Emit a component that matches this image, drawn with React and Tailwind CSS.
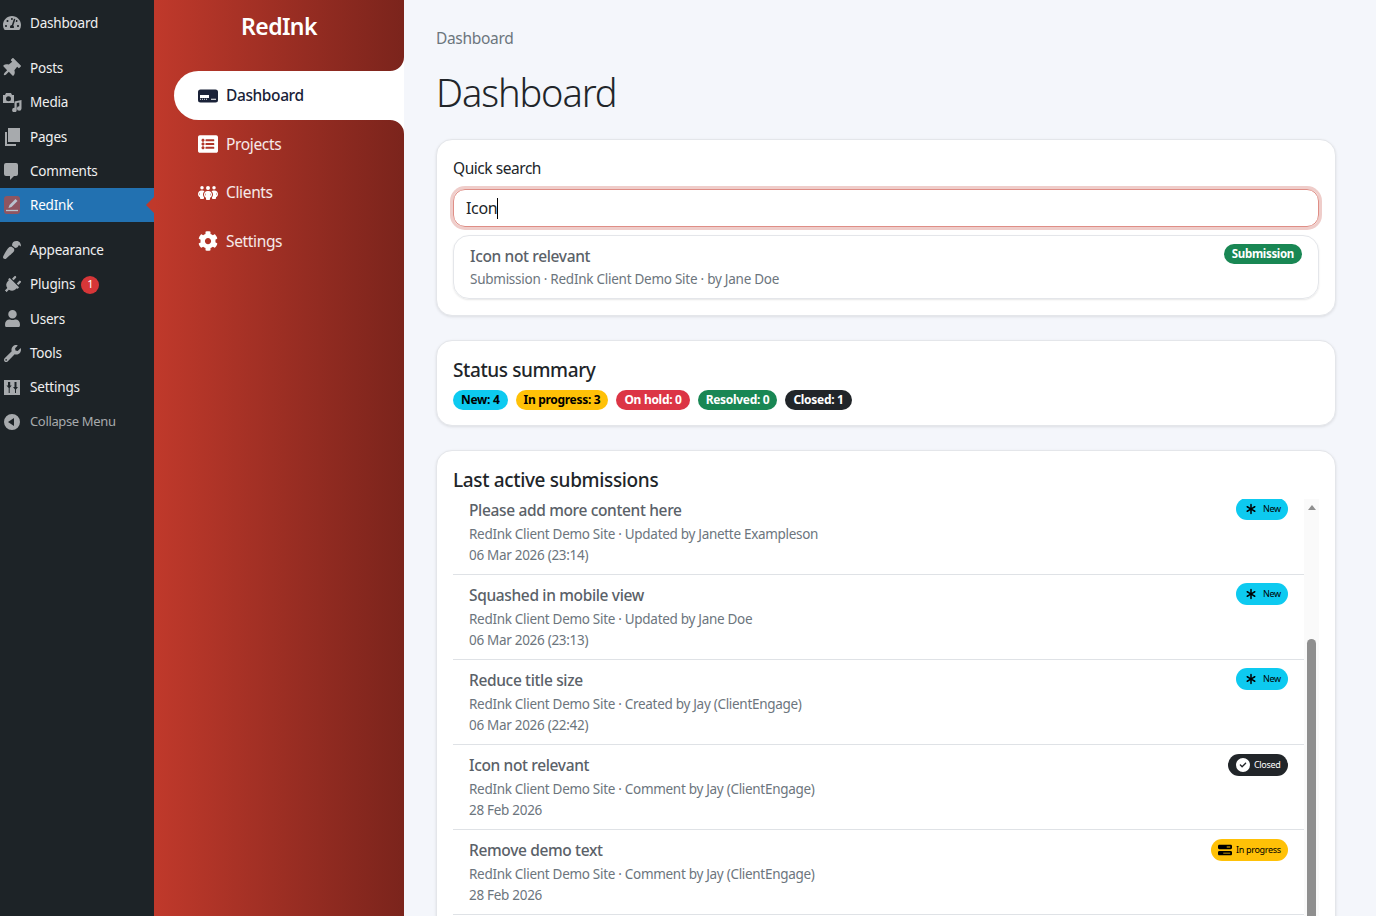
import {
  FaThumbtack, FaPaintBrush, FaPlug, FaUser, FaWrench, FaTachometerAlt, FaListAlt, FaCog,
} from "react-icons/fa";
import { FaAsterisk, FaBarsProgress, FaCircleCheck, FaPeopleGroup } from "react-icons/fa6";

function MediaIcon() {
  return (
    <svg viewBox="0 0 20 20" className="w-[20px] h-[20px]" fill="currentColor">
      <path d="M1 3h2l1-2h5l1 2h2v8H1zM6.500 4.200a2.500 2.500 0 1 0 0 5 2.500 2.500 0 0 0 0-5z" fillRule="evenodd" />
      <path d="M12.500 9.500l7-1.500V16.500a2.300 2.300 0 1 1-2.200-2.300V10.400l-2.600.6V18a2.300 2.300 0 1 1-2.200-2.300z" />
    </svg>
  );
}

function PagesIcon() {
  return (
    <svg viewBox="0 0 20 20" className="w-[20px] h-[20px]" fill="currentColor">
      <path d="M6 1h12v14H6z" />
      <path d="M3 5h2v12h9v2H3z" />
    </svg>
  );
}

function CommentIcon() {
  return (
    <svg viewBox="0 0 20 20" className="w-[20px] h-[20px]" fill="currentColor">
      <path d="M4 2h10a2 2 0 0 1 2 2v9a2 2 0 0 1-2 2h-2l-4 4v-4H4a2 2 0 0 1-2-2V4a2 2 0 0 1 2-2z" />
    </svg>
  );
}

function RedInkIcon() {
  return (
    <svg viewBox="0 0 20 20" className="w-[20px] h-[20px]">
      <rect x="2" y="1" width="16" height="18" rx="3" fill="#8f5561" />
      <path d="M13.500 4l2 2-6 6-3 1 1-3z" fill="#b9c4d0" />
      <path d="M4 15.500h12" stroke="#b9c4d0" strokeWidth="1.300" />
    </svg>
  );
}

function SettingsIcon() {
  return (
    <svg viewBox="0 0 20 20" className="w-[20px] h-[20px]" fill="currentColor">
      <path fillRule="evenodd" d="M2 3h16v15H2zM6 5v3.500H4.500L6.700 11V16h1V11l2-2.500H8.200V5zM12.500 5v5H11l2 2.500V16h1v-3.500l2-2.500h-1.500V5z" />
    </svg>
  );
}

function CollapseIcon() {
  return (
    <svg viewBox="0 0 20 20" className="w-[20px] h-[20px]" fill="currentColor">
      <path fillRule="evenodd" d="M10 2a8 8 0 1 1 0 16 8 8 0 0 1 0-16zM12 6l-6 4 6 4z" />
    </svg>
  );
}

function DriveIcon() {
  return (
    <svg viewBox="0 0 20 14" className="w-[20px] h-[14px]" fill="currentColor">
      <path fillRule="evenodd" d="M2.500 0.500h15a2.500 2.500 0 0 1 2.500 2.500v8a2.500 2.500 0 0 1-2.500 2.500h-15A2.500 2.500 0 0 1 0 11V3a2.500 2.500 0 0 1 2.500-2.500zM2 6v2.900h9V6zM13 9.800v1h5v-1zM2 9.800v1h.9v-1zM4 9.800v1h.9v-1zM6 9.800v1h.9v-1zM8 9.800v1h.9v-1z" />
    </svg>
  );
}

const wpMenu = [
  { label: "Dashboard", icon: <FaTachometerAlt size={18} />, gap: true },
  { label: "Posts", icon: <FaThumbtack size={19} className="-translate-x-[2px] rotate-45" /> },
  { label: "Media", icon: <MediaIcon /> },
  { label: "Pages", icon: <PagesIcon /> },
  { label: "Comments", icon: <CommentIcon /> },
  { label: "RedInk", icon: <RedInkIcon />, active: true, gap: true },
  { label: "Appearance", icon: <FaPaintBrush size={18} className="rotate-180" /> },
  { label: "Plugins", icon: <FaPlug size={18} className="rotate-45" />, count: 1 },
  { label: "Users", icon: <FaUser size={17} /> },
  { label: "Tools", icon: <FaWrench size={17} /> },
  { label: "Settings", icon: <SettingsIcon /> },
  { label: "Collapse Menu", icon: <CollapseIcon />, muted: true },
];

const submissions = [
  { title: "Please add more content here", sub: "RedInk Client Demo Site · Updated by Janette Exampleson", date: "06 Mar 2026 (23:14)", status: "new" },
  { title: "Squashed in mobile view", sub: "RedInk Client Demo Site · Updated by Jane Doe", date: "06 Mar 2026 (23:13)", status: "new" },
  { title: "Reduce title size", sub: "RedInk Client Demo Site · Created by Jay (ClientEngage)", date: "06 Mar 2026 (22:42)", status: "new" },
  { title: "Icon not relevant", sub: "RedInk Client Demo Site · Comment by Jay (ClientEngage)", date: "28 Feb 2026", status: "closed" },
  { title: "Remove demo text", sub: "RedInk Client Demo Site · Comment by Jay (ClientEngage)", date: "28 Feb 2026", status: "progress" },
];

function WpSidebar() {
  return (
    <div className="w-[154px] shrink-0 bg-[#1d2327] pt-[6px] text-[13.500px] tracking-[-0.2px]">
      {wpMenu.map((item) => (
        <div
          key={item.label}
          className={`relative flex h-[34.3px] items-center ${item.gap ? "mb-[10.7px]" : ""} ${item.active ? "bg-[#2271b1] text-white" : item.muted ? "text-[13px] tracking-[-0.35px] text-[#a7aaad]" : "text-[#f0f0f1]"}`}
        >
          <span className={`flex w-[30px] shrink-0 justify-center pr-[6px] ${item.active ? "" : "text-[#a7aaad]"}`}>{item.icon}</span>
          <span>{item.label}</span>
          {item.count && (
            <span className="ml-[6px] flex h-[18px] w-[18px] items-center justify-center rounded-full bg-[#d63638] text-[11px] text-white">{item.count}</span>
          )}
          {item.active && (
            <span className="absolute right-0 h-0 w-0 border-y-[8px] border-r-[8px] border-y-transparent border-r-[#c0392b]" />
          )}
        </div>
      ))}
    </div>
  );
}

function NavItem({ icon, label, active }) {
  if (active) {
    return (
      <div className="ml-[20px] flex h-[49px] items-center gap-[8px] rounded-l-[25px] bg-white pl-[24px] font-medium tracking-[-0.4px] text-[#1a2238]">
        <span className="flex w-[20px] justify-center">{icon}</span>
        {label}
      </div>
    );
  }
  return (
    <div className="ml-[20px] flex h-[48.500px] items-center gap-[8px] pl-[24px] text-white/90">
      <span className="flex w-[20px] justify-center text-white">{icon}</span>
      {label}
    </div>
  );
}

function RedSidebar() {
  return (
    <div className="relative w-[250px] shrink-0 bg-gradient-to-r from-[#c0392b] to-[#7b241c] text-[15.500px] tracking-[-0.35px]">
      <div className="h-[71px] pt-[9px] text-center text-[23px] font-semibold tracking-[-0.6px] text-white">RedInk</div>
      <NavItem active label="Dashboard" icon={<DriveIcon />} />
      <div className="pointer-events-none absolute right-0 top-[57px] h-[14px] w-[14px] bg-white [clip-path:path('M14_0V14H0A14_14_0_0_0_14_0Z')]" />
      <div className="pointer-events-none absolute right-0 top-[120px] h-[14px] w-[14px] bg-white [clip-path:path('M0_0H14V14A14_14_0_0_0_0_0Z')]" />
      <NavItem label="Projects" icon={<FaListAlt size={20} />} />
      <NavItem label="Clients" icon={<FaPeopleGroup size={20} />} />
      <NavItem label="Settings" icon={<FaCog size={20} />} />
    </div>
  );
}

function Card({ className, children }) {
  return (
    <div className={`rounded-[16px] border border-[#e4e6ea] bg-white px-[16px] shadow-[0_1px_3px_rgba(0,0,0,0.1)] ${className}`}>
      {children}
    </div>
  );
}

function Pill({ className, children }) {
  return (
    <span className={`flex h-[20px] items-center rounded-full px-[8px] text-[12px] font-bold leading-none tracking-[-0.3px] ${className}`}>
      {children}
    </span>
  );
}

function StatusBadge({ status }) {
  if (status === "new") {
    return (
      <span className="flex h-[22px] w-[52px] items-center gap-[6px] rounded-full bg-[#0dcaf0] pl-[9px] text-[9px] text-black">
        <FaAsterisk size={12} />New
      </span>
    );
  }
  if (status === "closed") {
    return (
      <span className="mt-[1px] flex h-[22px] w-[60px] items-center gap-[4px] rounded-full bg-[#212529] pl-[8px] text-[9px] text-white">
        <FaCircleCheck size={14} />Closed
      </span>
    );
  }
  return (
    <span className="mt-[1px] flex h-[22px] w-[77px] items-center gap-[4px] rounded-full bg-[#ffc107] pl-[7px] text-[9px] text-black">
      <FaBarsProgress size={14} />In progress
    </span>
  );
}

function SubmissionRow({ item }) {
  return (
    <div className="relative h-[85px] shrink-0 border-b border-[#dfe2e6] pl-[16px] pt-[8px]">
      <div className="text-[15.500px] font-medium leading-[24px] tracking-[-0.35px] text-[#5a6168]">{item.title}</div>
      <div className="mt-[2px] text-[13.500px] leading-[21px] tracking-[-0.3px] text-[#6c757d]">{item.sub}</div>
      <div className="text-[13.500px] leading-[21px] tracking-[-0.3px] text-[#6c757d]">{item.date}</div>
      <div className="absolute right-[16px] top-[8px]"><StatusBadge status={item.status} /></div>
    </div>
  );
}

function Main() {
  return (
    <div className="flex-1 overflow-hidden bg-[#f4f6fb] pl-[32px] pr-[40px] pt-[28px]">
      <div className="text-[15.500px] leading-[21px] text-[#6c757d]">Dashboard</div>
      <h1 className="mt-[20px] text-[38px] font-light leading-[47px] tracking-[-1.1px] text-[#212529]">Dashboard</h1>

      <Card className="mt-[23px] h-[177px] pt-[16px]">
        <div className="text-[15.500px] leading-[24px] tracking-[-0.45px] text-[#212529]">Quick search</div>
        <div className="mt-[9px] flex h-[38px] items-center rounded-[12px] border border-[#df8e86] px-[12px] text-[16px] text-[#212529] shadow-[0_0_0_3px_rgba(192,57,43,0.25)]">
          Icon<span className="h-[21px] w-px bg-black" />
        </div>
        <div className="relative mt-[8px] h-[64px] rounded-[16px] border border-[#e4e6ea] pl-[16px] pt-[8px] shadow-[0_1px_2px_rgba(0,0,0,0.1)]">
          <div className="text-[15.500px] font-medium leading-[24px] tracking-[-0.35px] text-[#5a6168]">Icon not relevant</div>
          <div className="mt-[1px] text-[13.500px] leading-[21px] tracking-[-0.26px] text-[#6c757d]">Submission · RedInk Client Demo Site · by Jane Doe</div>
          <span className="absolute right-[16px] top-[8px] flex h-[20px] items-center rounded-full bg-[#198754] px-[8px] text-[11.500px] font-bold text-white">Submission</span>
        </div>
      </Card>

      <Card className="mt-[24px] h-[86px] pt-[15px]">
        <div className="text-[19px] font-medium leading-[28px] tracking-[-0.4px] text-[#212529]">Status summary</div>
        <div className="mt-[6px] flex gap-[8px]">
          <Pill className="bg-[#0dcaf0] text-black">New: 4</Pill>
          <Pill className="bg-[#ffc107] text-black">In progress: 3</Pill>
          <Pill className="bg-[#dc3545] text-white">On hold: 0</Pill>
          <Pill className="bg-[#198754] text-white">Resolved: 0</Pill>
          <Pill className="bg-[#212529] text-white">Closed: 1</Pill>
        </div>
      </Card>

      <Card className="mt-[24px] h-[600px] pt-[15px]">
        <div className="text-[19px] font-medium leading-[28px] tracking-[-0.35px] text-[#212529]">Last active submissions</div>
        <div className="mt-[5px] flex h-[500px] overflow-hidden">
          <div className="flex-1 overflow-hidden">
            <div className="-mt-[9px] flex flex-col">
              {submissions.map((item) => <SubmissionRow key={item.title} item={item} />)}
            </div>
          </div>
          <div className="flex w-[15px] shrink-0 flex-col items-center bg-[#fafafa]">
            <span className="mt-[6px] h-0 w-0 border-x-[4px] border-b-[5px] border-x-transparent border-b-[#8f8f8f]" />
            <span className="mt-[129px] h-[400px] w-[9px] rounded-t-[5px] bg-[#8f8f8f]" />
          </div>
        </div>
      </Card>
    </div>
  );
}

export default function App() {
  return (
    <div className="flex h-[916px] overflow-hidden font-['Noto_Sans',sans-serif] tracking-[-0.02em]">
      <WpSidebar />
      <RedSidebar />
      <Main />
    </div>
  );
}
